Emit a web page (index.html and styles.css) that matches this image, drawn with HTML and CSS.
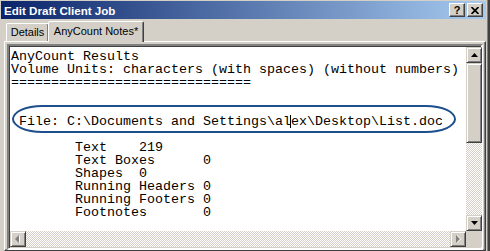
FILE: index.html
```html
<!DOCTYPE html>
<html lang="en">
<head>
  <meta charset="UTF-8">
  <title>Edit Draft Client Job</title>
  <link rel="stylesheet" href="styles.css">
</head>
<body>
  <div class="window">
    <div class="titlebar">
      <span class="title">Edit Draft Client Job</span>
      <div class="caption-buttons">
        <span class="cap-btn help">?</span>
        <span class="cap-btn close">
          <svg width="8" height="7" viewBox="0 0 8 7"><path d="M0.5 0 L7.5 7 M7.5 0 L0.5 7" stroke="#000" stroke-width="1.7"/></svg>
        </span>
      </div>
    </div>

    <div class="tabs">
      <div class="tab">Details</div>
      <div class="tab active">AnyCount Notes*</div>
    </div>

    <div class="panel">
      <div class="editbox">
        <div class="text-area">
<pre class="notes">AnyCount Results
Volume Units: characters (with spaces) (without numbers)
==============================


 File: C:\Documents and Settings\alex\Desktop\List.doc

        Text    219
        Text Boxes      0
        Shapes  0
        Running Headers 0
        Running Footers 0
        Footnotes       0</pre>
          <div class="oval"></div>
          <div class="caret"></div>
        </div>

        <div class="vscroll">
          <span class="sb-btn">
            <svg width="7" height="4" viewBox="0 0 7 4"><path d="M3.5 0 L7 4 L0 4 Z" fill="#000"/></svg>
          </span>
          <span class="sb-thumb"></span>
          <span class="sb-track"></span>
          <span class="sb-btn">
            <svg width="7" height="4" viewBox="0 0 7 4"><path d="M0 0 L7 0 L3.5 4 Z" fill="#000"/></svg>
          </span>
        </div>

        <div class="hscroll">
          <span class="sb-btn">
            <svg width="6" height="8" viewBox="0 0 6 8"><path d="M1 4 L5 0 L5 8 Z" fill="#fff"/><path d="M0 4 L4 0 L4 8 Z" fill="#808080"/></svg>
          </span>
          <span class="sb-track"></span>
          <span class="sb-btn">
            <svg width="6" height="8" viewBox="0 0 6 8"><path d="M2 0 L6 4 L2 8 Z" fill="#fff"/><path d="M1 0 L5 4 L1 8 Z" fill="#808080"/></svg>
          </span>
        </div>

        <div class="corner"></div>
      </div>
    </div>
  </div>
</body>
</html>
```

FILE: styles.css
```css
* { box-sizing: border-box; }
body { margin: 0; background: #d4d0c8; font-family: "Liberation Sans", Arial, sans-serif; font-size: 11px; }

.window {
  width: 490px; height: 251px; overflow: hidden;
  background: #d4d0c8;
  padding: 1px 2px 0 1px;
  border-right: 2px solid #404040;
  box-shadow: inset -1px 0 #808080;
  display: flex; flex-direction: column;
}

.titlebar {
  height: 19px; width: 485px;
  background: linear-gradient(to right, #0a246a, #a6caf0);
  display: flex; align-items: center; justify-content: space-between;
  padding: 0 3px 0 3px;
}
.title { color: #fff; font-weight: bold; font-size: 11.6px; }
.caption-buttons { display: flex; gap: 2px; }
.cap-btn {
  width: 16px; height: 14px;
  background: #d4d0c8;
  border: 1px solid; border-color: #fff #404040 #404040 #fff;
  box-shadow: inset -1px -1px #808080;
  display: flex; align-items: center; justify-content: center;
}
.help { font-weight: bold; font-size: 11px; line-height: 1; color: #000; }

.tabs { display: flex; align-items: flex-end; height: 22px; padding: 2px 0 0 5px; }
.tab {
  position: relative;
  width: 43px; height: 18px; padding-top: 2px;
  text-align: center; font-size: 11px;
  border: 1px solid; border-bottom: none;
  border-color: #fff #404040 transparent #fff;
  border-radius: 2px 2px 0 0;
  box-shadow: inset -1px 0 #808080;
  color: #000;
}
.tab.active {
  width: 96px; height: 21px; margin-left: -1px; padding-top: 3px;
  background: #d4d0c8; z-index: 1; margin-bottom: -1px;
}

.panel {
  margin-left: 3px; width: 482px; flex: 1;
  border: 1px solid; border-color: #fff #404040 #404040 #fff;
  box-shadow: inset -1px -1px #808080;
  padding: 2px 1px 0 2px;
}

.editbox {
  display: grid;
  grid-template-columns: 456px 16px;
  grid-template-rows: 184px 16px;
  border: 2px solid;
  border-color: #808080 #fff #fff #808080;
  box-shadow: inset 1px 1px #404040, inset -1px -1px #d4d0c8;
  padding: 1px;
  width: 476px;
}

.text-area { position: relative; background: #fff; overflow: hidden; }
.notes {
  margin: 0; padding: 3px 0 0 1px;
  font-family: "Liberation Mono", "Courier New", monospace;
  font-size: 13.333px; line-height: 13px; color: #000;
}
.caret {
  position: absolute; left: 280px; top: 68px;
  width: 1px; height: 13px; background: #000;
}
.oval {
  position: absolute; left: 2px; top: 58px;
  width: 444px; height: 28px;
  border: 2px solid #1d4f8c;
  border-radius: 30px / 14px;
}

.vscroll { display: flex; flex-direction: column; }
.hscroll { display: flex; }
.sb-btn {
  flex: none; width: 16px; height: 16px;
  background: #d4d0c8;
  border: 1px solid; border-color: #d4d0c8 #404040 #404040 #d4d0c8;
  box-shadow: inset 1px 1px #fff, inset -1px -1px #808080;
  display: flex; align-items: center; justify-content: center;
}
.sb-thumb {
  flex: none; height: 80px;
  background: #d4d0c8;
  border: 1px solid; border-color: #d4d0c8 #404040 #404040 #d4d0c8;
  box-shadow: inset 1px 1px #fff, inset -1px -1px #808080;
}
.sb-track {
  flex: 1;
  background: repeating-conic-gradient(#fff 0 25%, #d4d0c8 0 50%) 0 0 / 2px 2px;
}
.corner { background: #d4d0c8; }
```
